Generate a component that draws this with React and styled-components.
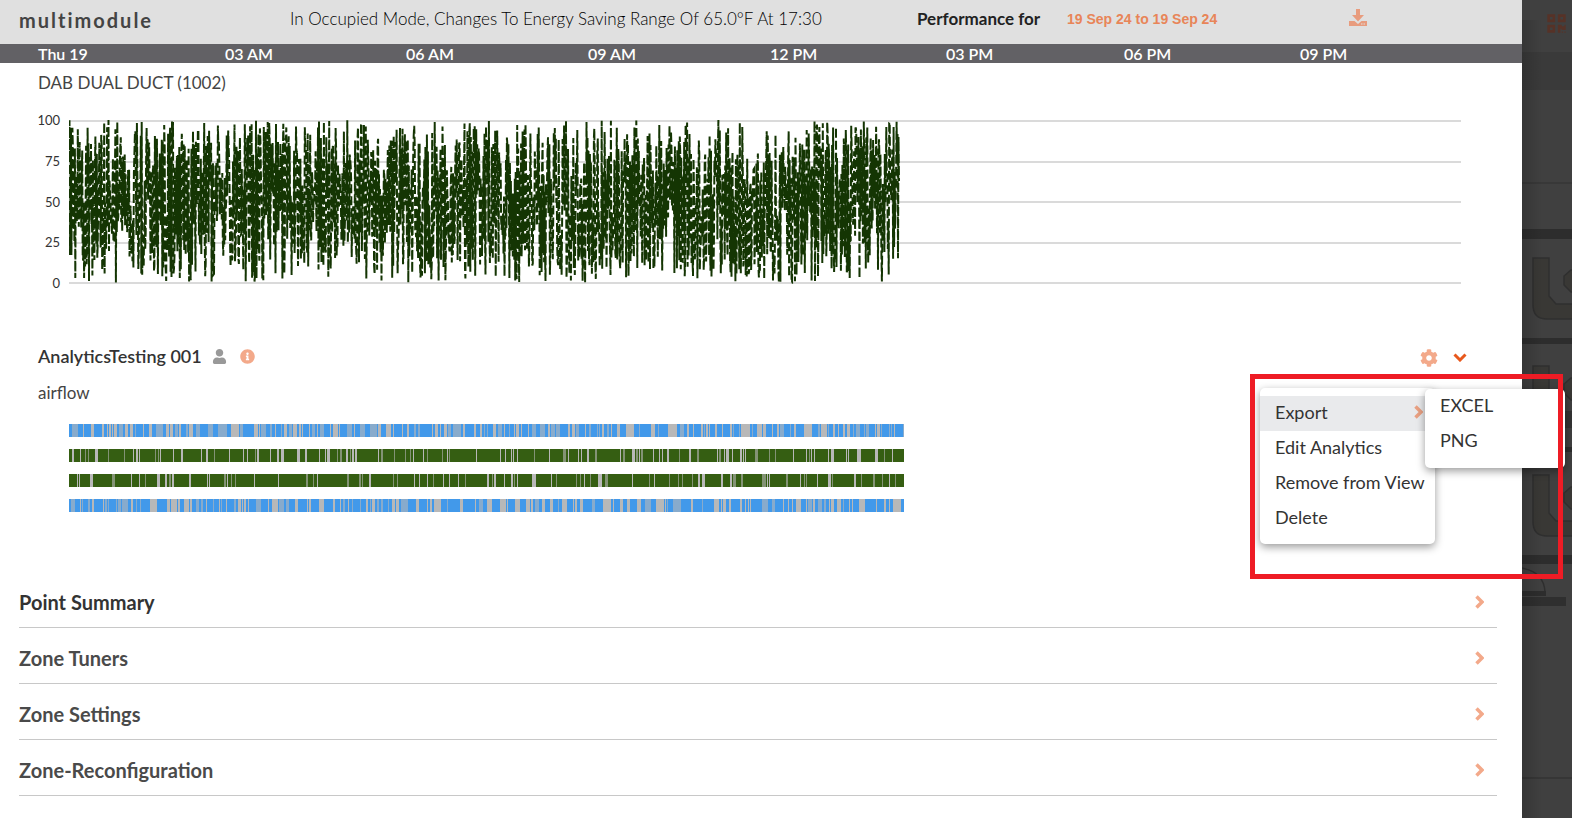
import styled, { createGlobalStyle, css } from 'styled-components'
import { FaCog, FaInfoCircle, FaQrcode, FaUser } from 'react-icons/fa'

const GlobalStyle = createGlobalStyle`
  * {
    box-sizing: border-box;
  }

  body {
    margin: 0;
    background: #404040;
    color: #333;
    font-family: Lato, 'Open Sans', sans-serif;
  }

  button {
    padding: 0;
    border: 0;
    background: none;
    color: inherit;
    font: inherit;
    cursor: pointer;
  }
`

const Page = styled.div`
  display: flex;
  min-height: 100vh;
  overflow: hidden;
`

const Panel = styled.main`
  flex: 1;
  min-width: 0;
  background: #fff;
  border-top-right-radius: 2px;
`

const Header = styled.header`
  display: grid;
  grid-template-columns: 271fr 627fr 150fr 282fr 173fr;
  align-items: center;
  height: 44px;
  padding: 0 0 8px 19px;
  background: #e0e0e0;
  white-space: nowrap;
`

const ModuleName = styled.h1`
  margin: 0;
  padding-top: 4px;
  color: #444;
  font-size: 20px;
  line-height: 24px;
  letter-spacing: 2px;
`

const Status = styled.p`
  margin: 0;
  color: #000;
  font-size: 17px;
  font-weight: 300;
`

const PerformanceLabel = styled.span`
  color: #222;
  font-size: 17px;
  font-weight: 700;
`

const DateRange = styled.button`
  justify-self: start;
  padding-top: 2px;
  color: #e88558;
  font-family: 'Liberation Sans', Arial, sans-serif;
  font-size: 14px;
  font-weight: 700;
`

const IconButton = styled.button`
  display: flex;
  justify-self: start;
  color: ${props => (props.$strong ? '#e8581c' : '#f3a98a')};
  font-size: ${props => props.$size || 18}px;
`

const TimeAxis = styled.div`
  display: grid;
  grid-template-columns: 187fr 181fr 182fr 182fr 176fr 178fr 176fr 222fr;
  height: 19px;
  padding-left: 38px;
  background: #626165;
  color: #fff;
  font-size: 16px;
  font-weight: 600;
  line-height: 20px;
  white-space: nowrap;
`

const Widget = styled.section`
  position: relative;
  padding: ${props => props.$top}px 61px 0 38px;
`

const PointName = styled.h3`
  margin: 0;
  color: #444;
  font-size: 17px;
  font-weight: 400;
  line-height: 24px;
`

const Chart = styled.div`
  display: flex;
  gap: 9px;
  height: 179px;
  margin-top: 17px;
`

const Scale = styled.div`
  display: flex;
  flex-direction: column;
  justify-content: space-between;
  align-items: flex-end;
  width: 22px;
  font-size: 13px;
  line-height: 16px;
`

const Plot = styled.svg`
  flex: 1;
  min-width: 0;
  height: 100%;
`

const WidgetHeader = styled.div`
  display: flex;
  align-items: center;
  height: 24px;
  margin-bottom: 13px;
`

const WidgetTitle = styled.h2`
  margin: 0 10px 0 0;
  font-size: 18px;
  font-weight: 600;
  line-height: 24px;
`

const UserMark = styled(FaUser)`
  margin-right: 13px;
  color: #999;
  font-size: 15px;
`

const Actions = styled.div`
  display: flex;
  align-items: center;
  gap: 15px;
  margin-left: auto;
  margin-right: -6px;
  padding-top: 3px;
`

const Strips = styled.div`
  display: flex;
  flex-direction: column;
  gap: 12px;
  margin: 19px 0 0 31px;
`

const Strip = styled.svg`
  display: block;
  width: 60%;
  height: 13px;
`

const menuBox = css`
  position: absolute;
  margin: 0;
  border-radius: 5px;
  background: #fff;
  box-shadow: 0 3px 8px rgba(0, 0, 0, 0.4);
  list-style: none;
`

const Menu = styled.ul`
  ${menuBox}
  top: 97px;
  right: 87px;
  z-index: 1;
  width: 175px;
  padding: 8px 0;
`

const SubMenu = styled.ul`
  ${menuBox}
  top: -7px;
  left: 165px;
  width: 140px;
  padding: 0 0 9px;
`

const MenuItem = styled.li`
  background: ${props => (props.$active ? '#e9eaec' : 'transparent')};
  position: relative;
`

const MenuButton = styled.button`
  display: flex;
  align-items: center;
  justify-content: space-between;
  width: 100%;
  height: 35px;
  padding: 0 12px 3px 15px;
  font-size: 18px;
  white-space: nowrap;
`

const Highlight = styled.div`
  position: absolute;
  top: 83px;
  right: -41px;
  z-index: 2;
  width: 313px;
  height: 205px;
  border: 5px solid #ee1c25;
  pointer-events: none;
`

const Sections = styled.div`
  margin: 60px 25px 0 19px;
`

const SectionRow = styled.button`
  display: flex;
  align-items: center;
  justify-content: space-between;
  width: 100%;
  height: 56px;
  padding: 4px 13px 0 0;
  border-bottom: 1px solid #c8c8c8;
  color: ${props => (props.$active ? '#333' : '#4a4a4a')};
  font-size: 20px;
  font-weight: 700;
`

const Backdrop = styled.aside`
  display: flex;
  width: 50px;
  background: #404040;
`

const BackdropArt = styled.svg`
  display: block;
  width: 50px;
  height: 818px;
`

const hours = ['Thu 19', '03 AM', '06 AM', '09 AM', '12 PM', '03 PM', '06 PM', '09 PM']
const sections = ['Point Summary', 'Zone Tuners', 'Zone Settings', 'Zone-Reconfiguration']

// small seeded generator, so every render draws the same series
const seeded = seed => () => {
  seed = (seed * 1664525 + 1013904223) % 4294967296
  return seed / 4294967296
}

const buildSeries = () => {
  const next = seeded(19)
  const points = []
  for (let i = 0; i <= 1700; i++) {
    const x = (i * 830) / 1700
    points.push(`${x.toFixed(1)},${(8 + next() * 163).toFixed(1)}`)
  }
  return points.join(' ')
}

const series = buildSeries()

const buildStripes = (seed, fill, gap) => {
  const next = seeded(seed)
  const stripes = []
  let x = 0
  while (x < 834) {
    x += 1 + Math.floor(next() * next() * fill)
    const width = 1 + Math.floor(next() * next() * gap)
    stripes.push({ x, width, opacity: next() > 0.35 ? 1 : 0.6 })
    x += width
  }
  return stripes
}

const strips = [
  { color: '#4299ea', stripes: buildStripes(7, 13, 9) },
  { color: '#355e12', stripes: buildStripes(23, 28, 4) },
  { color: '#355e12', stripes: buildStripes(41, 30, 4) },
  { color: '#4299ea', stripes: buildStripes(58, 13, 9) },
]

const DownloadIcon = () => (
  <svg width="18" height="18" viewBox="0 0 18 18" fill="#e89c7e" aria-hidden="true">
    <path d="M7 0h4v6h4l-6 6.500-6-6.500h4z" />
    <path d="M0 12h5.500l3.500 3 3.500-3H18v5H0z" />
    <path d="M12 14.500h1.500v1H12zM14.500 14.500H16v1h-1.500z" fill="#e0e0e0" />
  </svg>
)

const ChevronRight = ({ color = '#f3a98a' }) => (
  <svg width="9" height="14" viewBox="0 0 9 14" fill="none" stroke={color} strokeWidth="3.5" aria-hidden="true">
    <path d="M1.500 1.500L7 7l-5.500 5.500" />
  </svg>
)

const ChevronDown = () => (
  <svg width="14" height="9" viewBox="0 0 14 9" fill="none" stroke="#e8581c" strokeWidth="3" aria-hidden="true">
    <path d="M1.500 1.500L7 7l5.500-5.500" />
  </svg>
)

const TrendChart = () => (
  <Chart>
    <Scale>
      {[100, 75, 50, 25, 0].map(value => (
        <span key={value}>{value}</span>
      ))}
    </Scale>
    <Plot viewBox="0 0 1392 179" preserveAspectRatio="none">
      {[8, 49, 89, 130, 170].map(y => (
        <rect key={y} y={y} width="1392" height="2" fill="#dadada" />
      ))}
      <polyline points={series} fill="none" stroke="#143503" strokeWidth="2" strokeDasharray="9 3" />
    </Plot>
  </Chart>
)

const StatusStrip = ({ color, stripes }) => (
  <Strip viewBox="0 0 834 13" preserveAspectRatio="none" shapeRendering="crispEdges">
    <rect width="834" height="13" fill={color} />
    {stripes.map(stripe => (
      <rect key={stripe.x} x={stripe.x} width={stripe.width} height="13" fill="#b8b8b8" opacity={stripe.opacity} />
    ))}
  </Strip>
)

const WidgetMenu = () => (
  <Menu>
    <MenuItem $active>
      <MenuButton>
        Export
        <ChevronRight color="#e9a082" />
      </MenuButton>
      <SubMenu>
        <MenuItem><MenuButton>EXCEL</MenuButton></MenuItem>
        <MenuItem><MenuButton>PNG</MenuButton></MenuItem>
      </SubMenu>
    </MenuItem>
    <MenuItem><MenuButton>Edit Analytics</MenuButton></MenuItem>
    <MenuItem><MenuButton>Remove from View</MenuButton></MenuItem>
    <MenuItem><MenuButton>Delete</MenuButton></MenuItem>
  </Menu>
)

const Duct = ({ y }) => (
  <g transform={`translate(0 ${y})`} fill="#393835" stroke="#2f2f2f" strokeWidth="1.5">
    <path d="M11 1h16v38l7 8h18v15H25q-14 0-14-14z" />
    <path d="M52 13h-3l-7 6v9l7 7h3" />
  </g>
)

const DimmedPage = () => (
  <Backdrop>
    <BackdropArt viewBox="0 0 50 818" aria-hidden="true">
      <defs>
        <linearGradient id="edge">
          <stop offset="0" stopColor="#000" stopOpacity="0.16" />
          <stop offset="1" stopColor="#000" stopOpacity="0" />
        </linearGradient>
      </defs>
      <rect y="52" width="50" height="38" fill="#3a3a3a" />
      <FaQrcode x="24" y="13" size="21" color="#563227" />
      <rect y="182" width="50" height="2" fill="#383838" />
      <rect y="229" width="50" height="10" fill="#2d2d2d" />
      <Duct y={257} />
      <rect y="338" width="50" height="6" fill="#2d2d2d" />
      <Duct y={365} />
      <rect y="412" width="50" height="15" fill="#343434" />
      <rect y="447" width="50" height="5" fill="#2d2d2d" />
      <Duct y={474} />
      <rect y="555" width="50" height="9" fill="#2d2d2d" />
      <path d="M0 568q22 4 23 24" fill="none" stroke="#2e2e2e" strokeWidth="1.500" />
      <rect y="591" width="24" height="5" fill="#2d2d2d" />
      <rect y="597" width="44" height="9" fill="#2f2f2f" />
      <rect y="777" width="50" height="2" fill="#363636" />
      <rect y="20" width="20" height="798" fill="url(#edge)" />
    </BackdropArt>
  </Backdrop>
)

const App = () => {
  return (
    <>
      <GlobalStyle />
      <Page>
        <Panel>
          <Header>
            <ModuleName>multimodule</ModuleName>
            <Status>In Occupied Mode, Changes To Energy Saving Range Of 65.0°F At 17:30</Status>
            <PerformanceLabel>Performance for</PerformanceLabel>
            <DateRange>19 Sep 24 to 19 Sep 24</DateRange>
            <IconButton aria-label="Download"><DownloadIcon /></IconButton>
          </Header>
          <TimeAxis>
            {hours.map(hour => (
              <span key={hour}>{hour}</span>
            ))}
          </TimeAxis>
          <Widget $top={8}>
            <PointName>DAB DUAL DUCT (1002)</PointName>
            <TrendChart />
          </Widget>
          <Widget $top={53}>
            <WidgetHeader>
              <WidgetTitle>AnalyticsTesting 001</WidgetTitle>
              <UserMark />
              <IconButton $size={15} aria-label="Details"><FaInfoCircle /></IconButton>
              <Actions>
                <IconButton aria-label="Settings"><FaCog /></IconButton>
                <IconButton $strong aria-label="Collapse"><ChevronDown /></IconButton>
              </Actions>
            </WidgetHeader>
            <PointName>airflow</PointName>
            <Strips>
              {strips.map((strip, index) => (
                <StatusStrip key={index} {...strip} />
              ))}
            </Strips>
            <WidgetMenu />
            <Highlight />
          </Widget>
          <Sections>
            {sections.map((name, index) => (
              <SectionRow key={name} $active={index === 0}>
                {name}
                <ChevronRight />
              </SectionRow>
            ))}
          </Sections>
        </Panel>
        <DimmedPage />
      </Page>
    </>
  )
}

export default App
